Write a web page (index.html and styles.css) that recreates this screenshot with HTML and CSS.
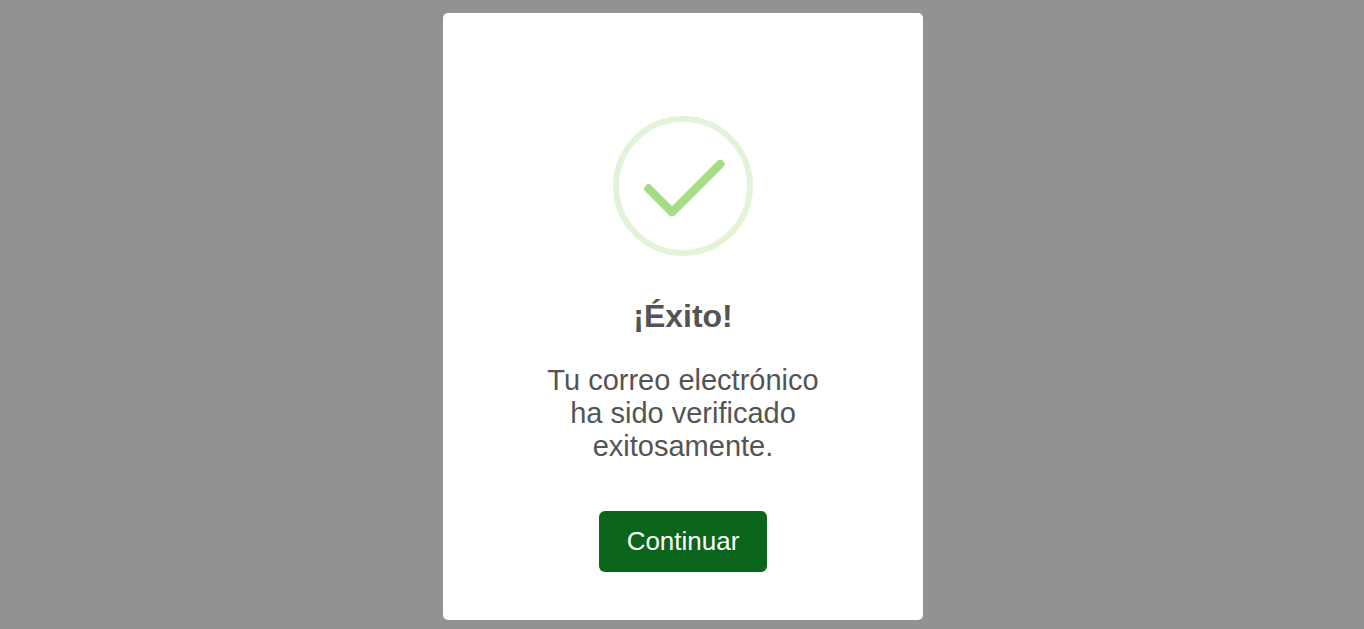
FILE: index.html
```html
<!DOCTYPE html>
<html lang="es">
<head>
<meta charset="utf-8">
<meta name="viewport" content="width=device-width, initial-scale=1">
<title>¡Éxito!</title>
<link rel="stylesheet" href="styles.css">
</head>
<body class="backdrop">
<main class="modal" role="dialog" aria-labelledby="modal-title" aria-describedby="modal-text">
<svg class="modal-icon" viewBox="0 0 140 140" aria-hidden="true">
<circle cx="70" cy="70" r="67" fill="none" stroke="#e3f3da" stroke-width="6"/>
<g fill="#a5dc86">
<rect x="-20.500" y="-4.200" width="41" height="8.400" rx="3.200" transform="translate(47.200 84.200) rotate(45)"/>
<rect x="-37.500" y="-4.200" width="75" height="8.400" rx="3.200" transform="translate(83.500 71.800) rotate(-45)"/>
</g>
</svg>
<h1 class="modal-title" id="modal-title">¡Éxito!</h1>
<p class="modal-text" id="modal-text">Tu correo electrónico ha sido verificado exitosamente.</p>
<button class="modal-button" type="button">Continuar</button>
</main>
</body>
</html>
```

FILE: styles.css
```css
* {
  box-sizing: border-box;
}

.backdrop {
  margin: 0;
  min-height: 100vh;
  padding: 13px 12px 9px 14px;
  display: flex;
  justify-content: center;
  align-items: flex-start;
  background: #929292;
  font-family: "Liberation Sans", Arial, sans-serif;
}

.modal {
  width: 100%;
  max-width: 480px;
  padding: 103px 96px 48px;
  display: flex;
  flex-direction: column;
  align-items: center;
  border-radius: 5px;
  background: #fff;
  color: #545454;
  text-align: center;
}

.modal-icon {
  width: 140px;
  height: 140px;
}

.modal-title {
  margin: 40px 0 28px;
  font-size: 32px;
  line-height: 40px;
  font-weight: 700;
}

.modal-text {
  margin: 0;
  font-size: 29px;
  line-height: 33px;
}

.modal-button {
  margin-top: 48px;
  padding: 14px 28px;
  border: 0;
  border-radius: 6px;
  background: #0b651a;
  color: #fff;
  font-family: inherit;
  font-size: 26px;
  line-height: 33px;
}
```
